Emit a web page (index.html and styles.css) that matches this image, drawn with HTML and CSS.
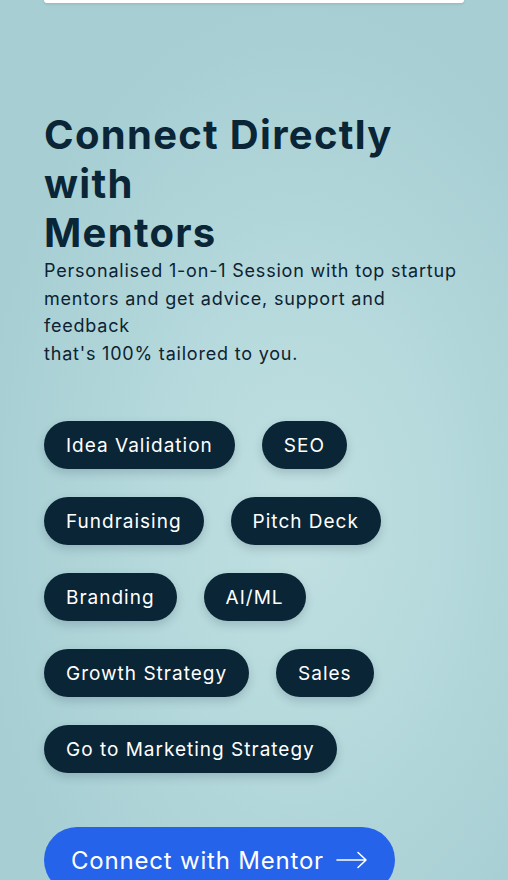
FILE: index.html
```html
<!DOCTYPE html>
<html lang="en">
<head>
<meta charset="utf-8">
<title>Connect with Mentors</title>
<link rel="stylesheet" href="styles.css">
</head>
<body>
<div class="topbar"></div>
<main class="hero">
  <h1 class="title">Connect Directly with<br>Mentors</h1>
  <p class="lead">Personalised 1-on-1 Session with top startup<br>mentors and get advice, support and<br>feedback<br>that's 100% tailored to you.</p>
  <ul class="chips">
    <li class="chip">Idea Validation</li>
    <li class="chip">SEO</li>
    <li class="chip">Fundraising</li>
    <li class="chip">Pitch Deck</li>
    <li class="chip">Branding</li>
    <li class="chip">AI/ML</li>
    <li class="chip">Growth Strategy</li>
    <li class="chip">Sales</li>
    <li class="chip">Go to Marketing Strategy</li>
  </ul>
  <a class="cta" href="#">Connect with Mentor
    <svg class="cta-arrow" width="32" height="18" viewBox="0 0 32 18" fill="none" stroke="#fff" stroke-width="1.6" stroke-linecap="round" stroke-linejoin="round"><path d="M1 9H30M22 1.5L30 9L22 16.5"/></svg>
  </a>
</main>
</body>
</html>
```
FILE: styles.css
```css
* { box-sizing: border-box; }
html, body { margin: 0; padding: 0; }
body {
  width: 508px;
  height: 880px;
  overflow: hidden;
  font-family: "Inter", "Noto Sans", sans-serif;
  color: #0b2536;
  background:
    radial-gradient(ellipse 330px 520px at 300px 520px, #c1e0e2 0%, #b5d9dc 45%, rgba(165, 206, 211, 0) 100%),
    #a6ced3;
}
.topbar {
  margin: 0 44px;
  height: 3px;
  background: #ffffff;
  border-radius: 0 0 10px 10px;
  box-shadow: 0 1px 3px rgba(0, 0, 0, 0.12);
}
.hero {
  padding: 107px 44px 0;
}
.title {
  margin: 0;
  font-size: 40px;
  line-height: 49px;
  font-weight: 700;
  color: #0a2536;
  letter-spacing: 1.3px;
}
.lead {
  margin: 0;
  font-size: 18px;
  line-height: 27.5px;
  font-weight: 400;
  letter-spacing: 0.8px;
  color: #0d2232;
}
.chips {
  list-style: none;
  margin: 54px 0 0;
  padding: 0;
  display: flex;
  flex-wrap: wrap;
  column-gap: 27px;
  row-gap: 28px;
}
.chip {
  height: 48px;
  padding: 0 22px;
  display: flex;
  align-items: center;
  border-radius: 24px;
  background: #0a2536;
  color: #ffffff;
  font-size: 19px;
  letter-spacing: 1px;
  box-shadow: 0 4px 10px rgba(10, 37, 54, 0.18);
}
.cta {
  margin-top: 54px;
  display: inline-flex;
  align-items: center;
  gap: 12px;
  height: 66px;
  padding: 0 27px;
  border-radius: 33px;
  background: #2563eb;
  color: #ffffff;
  font-size: 24px;
  letter-spacing: 0.8px;
  text-decoration: none;
}
.cta-arrow { display: block; }
```
